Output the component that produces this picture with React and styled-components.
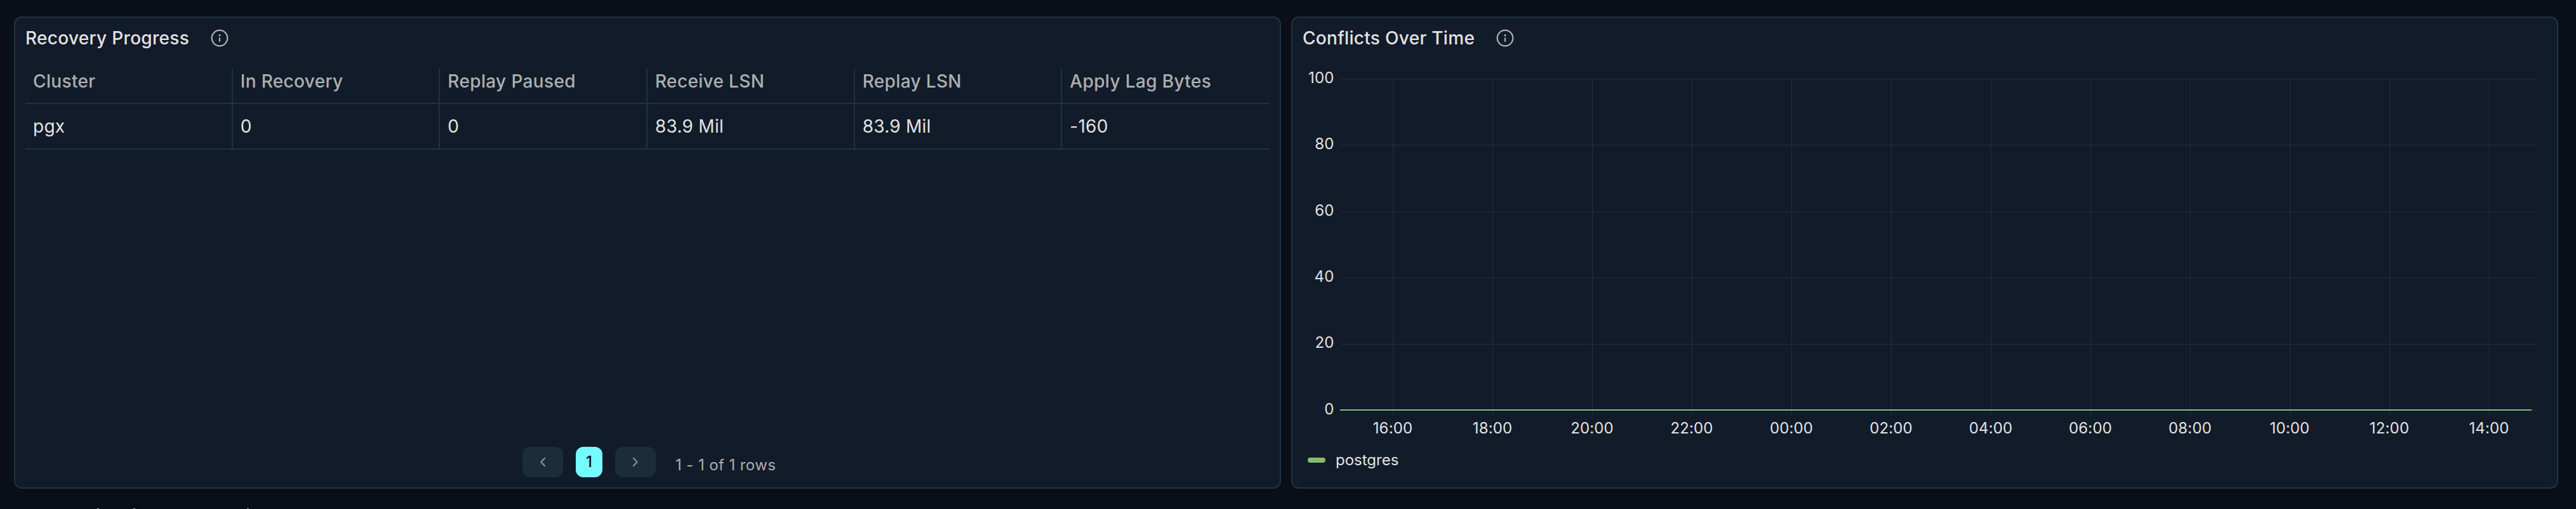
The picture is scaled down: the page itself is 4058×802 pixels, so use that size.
import React from 'react'
import styled, { createGlobalStyle } from 'styled-components'

const columns = ['Cluster', 'In Recovery', 'Replay Paused', 'Receive LSN', 'Replay LSN', 'Apply Lag Bytes']
const rows = [['pgx', '0', '0', '83.9 Mil', '83.9 Mil', '-160']]
const hours = ['16:00', '18:00', '20:00', '22:00', '00:00', '02:00', '04:00', '06:00', '08:00', '10:00', '12:00', '14:00']
const levels = [100, 80, 60, 40, 20, 0]

const InfoIcon = () => (
  <Info viewBox='0 0 28 28'>
    <circle cx='14' cy='14' r='12.3' fill='none' stroke='currentColor' strokeWidth='2.2' />
    <circle cx='14' cy='9.6' r='1.6' fill='currentColor' />
    <path d='M14 14v5' stroke='currentColor' strokeWidth='2.2' strokeLinecap='round' />
  </Info>
)

const Chevron = ({ d }) => (
  <svg width='10' height='16' viewBox='0 0 10 16' fill='none' stroke='currentColor' strokeWidth='2.4' strokeLinecap='round' strokeLinejoin='round'>
    <path d={d} />
  </svg>
)

const Chart = () => {
  const x = (i) => 158.5 + i * 157
  const y = (v) => 618.5 - v * 5.22
  return (
    <Plot viewBox='0 0 1992 740'>
      {levels.map((v) => (
        <g key={v}>
          <line className='grid' x1='76' x2='1960.5' y1={Math.floor(y(v)) + 0.5} y2={Math.floor(y(v)) + 0.5} />
          <text x='65.5' y={y(v) + 6.3} textAnchor='end'>{v}</text>
        </g>
      ))}
      {hours.map((hour, i) => (
        <g key={hour}>
          <line className='grid' x1={x(i)} x2={x(i)} y1='96' y2='626' />
          <text x={x(i) - 0.5} y='655' textAnchor='middle'>{hour}</text>
        </g>
      ))}
      <line className='series' x1='75' x2='1952' y1='618' y2='618' />
    </Plot>
  )
}

const App = () => {
  return (
    <Page>
      <GlobalStyle />
      <Panels>
        <Panel>
          <Header>
            <Title>Recovery Progress</Title>
            <InfoIcon />
          </Header>
          <Table>
            <HeadRow>
              {columns.map((name) => <HeadCell key={name}>{name}</HeadCell>)}
            </HeadRow>
            {rows.map((row) => (
              <Row key={row[0]}>
                {row.map((value, i) => <Cell key={i}>{value}</Cell>)}
              </Row>
            ))}
          </Table>
          <Pagination>
            <StepButton aria-label='previous'><Chevron d='M8 2 2.4 8 8 14' /></StepButton>
            <PageButton>1</PageButton>
            <StepButton aria-label='next'><Chevron d='M2 2 7.6 8 2 14' /></StepButton>
            <Summary>1 - 1 of 1 rows</Summary>
          </Pagination>
        </Panel>
        <Panel>
          <Header>
            <Title>Conflicts Over Time</Title>
            <InfoIcon />
          </Header>
          <Chart />
          <Legend>
            <Swatch />
            postgres
          </Legend>
        </Panel>
      </Panels>
      <NextRow>
        <Mark $left={153} />
        <Mark $left={210} />
        <Mark $left={389} />
      </NextRow>
    </Page>
  )
}

const GlobalStyle = createGlobalStyle`
  * {
    box-sizing: border-box;
  }
  body {
    margin: 0;
    background: #0a0e16;
    font-family: Inter, sans-serif;
  }
`;

const Page = styled.main`
  display: flex;
  flex-direction: column;
  height: 802px;
  overflow: hidden;
  color: #e2e2e2;
`;

const Panels = styled.div`
  display: grid;
  grid-template-columns: 1996px 1996px;
  gap: 16px;
  padding: 26px 0 0 22px;
`;

const Panel = styled.section`
  display: flex;
  flex-direction: column;
  height: 744px;
  border: 2px solid #1e3542;
  border-radius: 12px;
  background: #121b29;
`;

const Header = styled.header`
  display: flex;
  flex: none;
  align-items: center;
  gap: 34px;
  height: 64px;
  padding-left: 16px;
`;

const Title = styled.h2`
  margin: 0;
  font-size: 28px;
  font-weight: 500;
  letter-spacing: 0.3px;
  line-height: 44px;
`;

const Info = styled.svg`
  width: 28px;
  height: 28px;
  color: #adafb2;
`;

const Table = styled.div`
  margin: 16px 16px 0;
  font-size: 28px;
`;

const Row = styled.div`
  display: grid;
  grid-template-columns: repeat(6, 1fr);
  height: 72px;
  border-bottom: 2px solid #1b3441;
`;

const HeadRow = styled(Row)`
  height: 56px;
  color: #adafb0;
`;

const Cell = styled.div`
  padding-left: 12px;
  border-right: 2px solid #1b3441;
  letter-spacing: 0.25px;
  line-height: 70px;
  &:last-child {
    border-right: none;
  }
`;

const HeadCell = styled(Cell)`
  font-weight: 500;
  letter-spacing: 0.35px;
  line-height: 40px;
`;

const Pagination = styled.div`
  display: flex;
  gap: 20px;
  margin-top: auto;
  height: 64px;
  padding-left: 799px;
`;

const PageButton = styled.button`
  width: 42px;
  height: 48px;
  padding: 0 0 2px;
  border: none;
  border-radius: 12px;
  background: #75fbfd;
  color: #0a0e16;
  font: 500 24px Inter, sans-serif;
`;

const StepButton = styled(PageButton)`
  display: flex;
  align-items: center;
  justify-content: center;
  width: 64px;
  padding: 0;
  background: #1b2d3a;
  color: #858b92;
`;

const Summary = styled.span`
  margin-left: 11px;
  color: #adafb0;
  font-size: 24px;
  letter-spacing: 0.4px;
  line-height: 57px;
`;

const Plot = styled.svg`
  flex: none;
  width: 1992px;
  height: 740px;
  margin-top: -64px;
  font-size: 24px;
  letter-spacing: 0.15px;
  fill: #e2e2e2;
  .grid {
    stroke: #252e3b;
    stroke-width: 1;
  }
  .series {
    stroke: #85bc70;
    stroke-width: 2;
  }
`;

const Legend = styled.div`
  display: flex;
  align-items: center;
  gap: 16px;
  margin-top: -61px;
  padding-left: 24px;
  font-size: 24px;
  line-height: 36px;
`;

const Swatch = styled.span`
  width: 28px;
  height: 8px;
  border-radius: 4px;
  background: #85bc70;
`;

const NextRow = styled.div`
  position: relative;
  height: 1px;
  margin-top: auto;
`;

const Mark = styled.span`
  position: absolute;
  left: ${({ $left }) => $left}px;
  width: 3px;
  height: 1px;
  background: #a0a1a3;
`;

export default App
